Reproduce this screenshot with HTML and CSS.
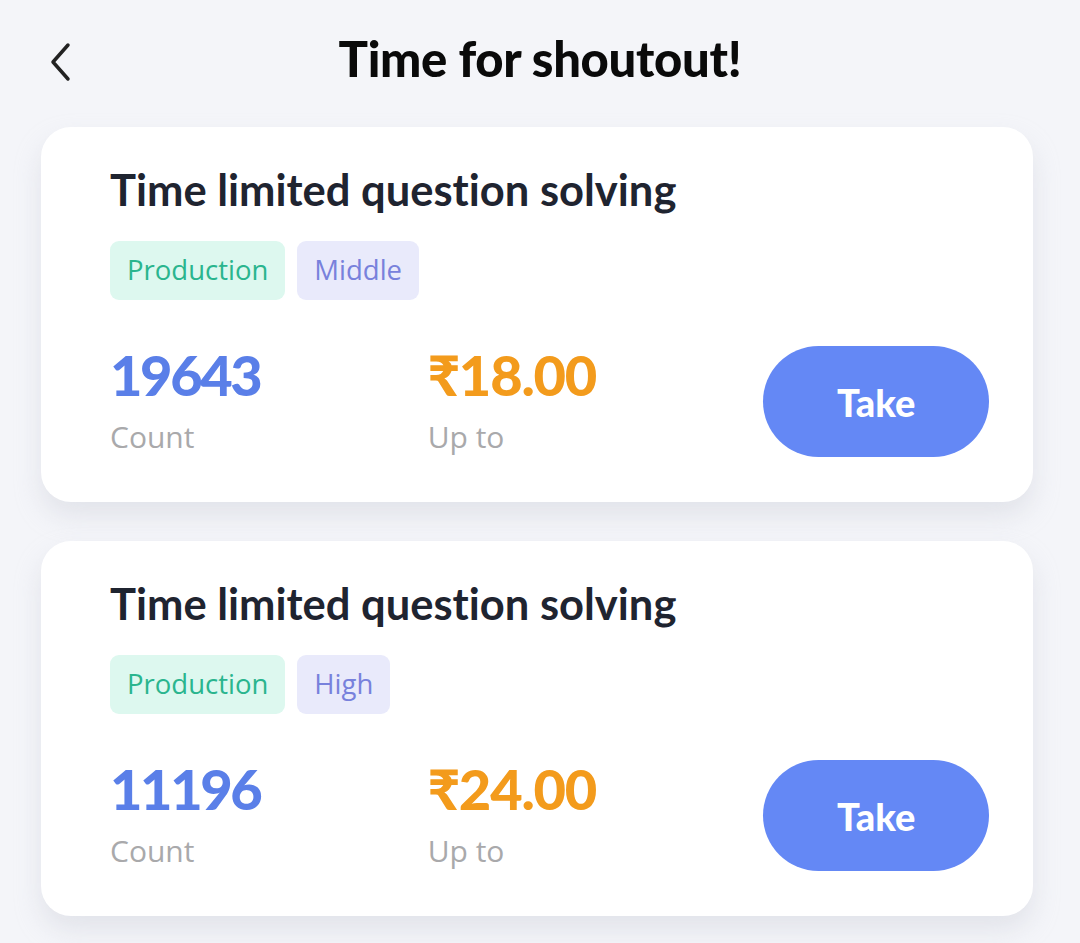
FILE: index.html
```html
<!DOCTYPE html>
<html>
<head>
<meta charset="utf-8">
<link rel="stylesheet" href="styles.css">
</head>
<body>
<div class="page">
  <header class="topbar">
    <svg class="back" width="30" height="40" viewBox="0 0 30 40"><path d="M22 3 L7 20 L22 37" fill="none" stroke="#222" stroke-width="3.5" stroke-linecap="round" stroke-linejoin="round"/></svg>
    <h1 class="title">Time for shoutout!</h1>
  </header>
  <div class="list">
    <div class="card">
      <h2 class="card-title">Time limited question solving</h2>
      <div class="tags">
        <span class="tag tag-green">Production</span>
        <span class="tag tag-purple">Middle</span>
      </div>
      <div class="stats">
        <div class="stat stat-count">
          <div class="num num-blue">19643</div>
          <div class="label">Count</div>
        </div>
        <div class="stat stat-price">
          <div class="num num-orange">₹18.00</div>
          <div class="label">Up to</div>
        </div>
        <button class="take">Take</button>
      </div>
    </div>
    <div class="card">
      <h2 class="card-title">Time limited question solving</h2>
      <div class="tags">
        <span class="tag tag-green">Production</span>
        <span class="tag tag-purple">High</span>
      </div>
      <div class="stats">
        <div class="stat stat-count">
          <div class="num num-blue">11196</div>
          <div class="label">Count</div>
        </div>
        <div class="stat stat-price">
          <div class="num num-orange">₹24.00</div>
          <div class="label">Up to</div>
        </div>
        <button class="take">Take</button>
      </div>
    </div>
  </div>
</div>
</body>
</html>
```
FILE: styles.css
```css
* { box-sizing: border-box; }
html, body { margin: 0; padding: 0; }
body {
  background: #f4f5f9;
  font-family: Lato, "Noto Sans", sans-serif;
  font-variant-ligatures: none;
  width: 1080px;
  height: 943px;
  overflow: hidden;
}
.topbar {
  position: relative;
  height: 127px;
  display: flex;
  align-items: flex-start;
  justify-content: center;
}
.back {
  position: absolute;
  left: 46px;
  top: 42px;
}
.title {
  margin: 26px 0 0 0;
  font-size: 49px;
  font-weight: 900;
  color: #0a0a0a;
  letter-spacing: -0.3px;
  line-height: 64px;
}
.list {
  display: flex;
  flex-direction: column;
  gap: 39px;
  padding-left: 41px;
}
.card {
  width: 992px;
  height: 375px;
  background: #fff;
  border-radius: 30px;
  box-shadow: 0 14px 26px rgba(196, 199, 210, 0.38);
  padding: 34px 44px 0 69px;
}
.card-title {
  margin: 0;
  font-size: 43.5px;
  font-weight: 700;
  color: #1f2430;
  line-height: 56px;
}
.tags {
  display: flex;
  gap: 12px;
  margin-top: 24px;
}
.tag {
  height: 59px;
  line-height: 57px;
  padding: 0 17px;
  border-radius: 9px;
  font-family: "Open Sans", "Noto Sans", sans-serif;
  font-size: 27.5px;
}
.tag-green { background: #ddf8ef; color: #2ab58e; }
.tag-purple { background: #e9eafb; color: #7881dc; }
.stats {
  display: flex;
  align-items: flex-start;
  margin-top: 46px;
}
.stat { display: flex; flex-direction: column; }
.stat-count { width: 318px; }
.stat-price { width: 336px; }
.num {
  font-size: 56px;
  font-weight: 900;
  line-height: 58px;
}
.num-blue { color: #5a7fe8; letter-spacing: -2.4px; }
.num-orange { color: #f39b1c; letter-spacing: -1.2px; }
.label {
  margin-top: 13px;
  font-family: "Open Sans", "Noto Sans", sans-serif;
  font-size: 30px;
  color: #a9a9ab;
  line-height: 40px;
}
.take {
  width: 226px;
  height: 111px;
  border: none;
  border-radius: 56px;
  background: #6488f5;
  color: #fff;
  font-family: Lato, sans-serif;
  font-weight: 900;
  font-size: 38px;
}
```
